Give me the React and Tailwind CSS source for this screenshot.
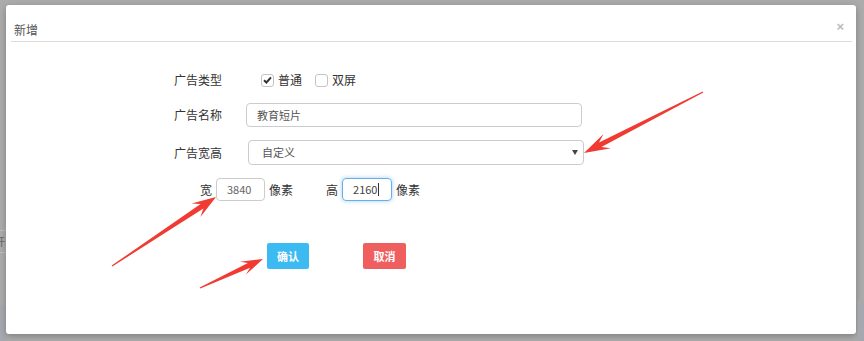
import React from "react";

// annotation arrow: thin tail widening into a swept head
function arrowPoints(tail, tip, head = 22, barb = 8) {
  const dx = tip[0] - tail[0];
  const dy = tip[1] - tail[1];
  const len = Math.hypot(dx, dy);
  const ux = dx / len;
  const uy = dy / len;
  const nx = -uy;
  const ny = ux;
  const at = (d, off) => [tip[0] - ux * d + nx * off, tip[1] - uy * d + ny * off];
  const pts = [
    at(len, 0.6),
    at(head * 0.7, 2.6),
    at(head, barb),
    tip,
    at(head, -barb),
    at(head * 0.7, -2.6),
    at(len, -0.6),
  ];
  return pts.map((p) => p[0].toFixed(1) + "," + p[1].toFixed(1)).join(" ");
}

const arrows = [
  { tail: [703, 92], tip: [584, 153], head: 26, barb: 8 },
  { tail: [112, 266], tip: [216, 197], head: 24, barb: 8 },
  { tail: [200, 288], tip: [263, 259], head: 22, barb: 7 },
];

function Checkbox({ checked, label }) {
  return (
    <label className="flex items-center gap-[4px]">
      <span className="flex h-[13px] w-[13px] items-center justify-center rounded-[3px] border border-[#c4c4c4] bg-white">
        {checked && (
          <svg width="9" height="8" viewBox="0 0 9 8">
            <path d="M1 4.2 L3.4 6.5 L8 1.3" fill="none" stroke="#333" strokeWidth="2" />
          </svg>
        )}
      </span>
      <span className="text-[12px] text-[#333]">{label}</span>
    </label>
  );
}

export default function App() {
  return (
    <div
      className="relative flex h-[341px] w-[864px] overflow-hidden bg-[#ababab]"
      style={{ fontFamily: '"Noto Sans CJK SC", "Noto Sans", sans-serif' }}
    >
      {/* page behind, left edge */}
      <div className="flex w-[6px] flex-col">
        <div className="h-[230px]" />
        <div className="flex h-[23px] items-center overflow-hidden border-y border-[#bdbdbd] text-[11px] leading-none text-[#666]">
          <span className="-ml-[6px]">开</span>
        </div>
        <div className="h-[52px]" />
        <div className="flex-1 bg-[#a6a8ae]" />
      </div>

      {/* dialog */}
      <div className="mt-[5px] flex h-[329px] w-[850px] flex-col rounded-[3px] bg-white shadow-[0_2px_6px_rgba(0,0,0,0.25)]">
        <div className="mx-[5px] mr-[4px] flex h-[37px] items-end justify-between border-b border-[#dcdcdc] pb-[3px]">
          <span className="pl-[3px] text-[12px] leading-[16px] text-[#555]">新增</span>
          <span className="pr-[8px] pb-[3px] text-[13px] font-bold leading-[16px] text-[#bbb]" style={{ fontFamily: '"Liberation Sans", sans-serif' }}>
            ×
          </span>
        </div>

        <div className="flex flex-col pl-[168px] pt-[26px]">
          {/* 广告类型 */}
          <div className="flex h-[24px] items-center">
            <span className="w-[87px] text-[12px] text-[#333]">广告类型</span>
            <div className="flex items-center gap-[13px]">
              <Checkbox checked label="普通" />
              <Checkbox label="双屏" />
            </div>
          </div>

          {/* 广告名称 */}
          <div className="mt-[11px] flex h-[24px] items-center">
            <span className="w-[72px] text-[12px] text-[#333]">广告名称</span>
            <div className="flex h-[24px] w-[336px] items-center rounded-[4px] border border-[#ccc] pl-[10px] text-[11px] text-[#555]">
              教育短片
            </div>
          </div>

          {/* 广告宽高 */}
          <div className="mt-[13px] flex h-[25px] items-center">
            <span className="w-[74px] text-[12px] text-[#333]">广告宽高</span>
            <div className="flex h-[25px] w-[336px] items-center justify-between rounded-[4px] border border-[#ccc] pl-[13px] pr-[5px] text-[11px] text-[#555]">
              <span>自定义</span>
              <svg width="6" height="5" viewBox="0 0 6 5">
                <path d="M0 0 L6 0 L3 5 Z" fill="#444" />
              </svg>
            </div>
          </div>

          {/* 宽 / 高 */}
          <div className="ml-[26px] mt-[13px] flex h-[23px] items-center text-[12px] text-[#333]">
            <span className="mr-[4px]">宽</span>
            <div className="flex h-[23px] w-[49px] items-center rounded-[4px] border border-[#ccc] pl-[10px] text-[11px] text-[#666]">
              3840
            </div>
            <span className="ml-[4px]">像素</span>
            <span className="ml-[33px] mr-[4px]">高</span>
            <div className="flex h-[23px] w-[50px] items-center rounded-[4px] border border-[#66afe9] pl-[10px] text-[11px] text-[#444] shadow-[0_0_4px_rgba(102,175,233,0.6)]">
              2160<span className="ml-[1px] h-[13px] w-px bg-[#333]" />
            </div>
            <span className="ml-[4px]">像素</span>
          </div>

          {/* buttons */}
          <div className="ml-[93px] mt-[42px] flex gap-[54px]">
            <button className="h-[26px] w-[42px] rounded-[2px] bg-[#3cbaf2] text-[11px] font-bold text-white">
              确认
            </button>
            <button className="h-[26px] w-[43px] rounded-[2px] bg-[#ef5f5f] text-[11px] font-bold text-white">
              取消
            </button>
          </div>
        </div>
      </div>

      {/* page behind, right edge */}
      <div className="ml-[2px] flex flex-1 flex-col overflow-hidden">
        <div className="flex h-[300px] flex-col pt-[5px] text-[12px] leading-[16px] text-[#555]">
          {[0, 1, 2, 3, 4, 5, 6].map((i) => (
            <span key={i} className="mb-[13px] whitespace-nowrap">
              「发
            </span>
          ))}
        </div>
        <div className="flex-1 bg-[#a6a8ae]" />
      </div>

      {/* red annotation arrows */}
      <svg className="pointer-events-none absolute left-0 top-0" width="864" height="341">
        {arrows.map((a, i) => (
          <polygon key={i} points={arrowPoints(a.tail, a.tip, a.head, a.barb)} fill="#f03a32" />
        ))}
      </svg>
    </div>
  );
}
